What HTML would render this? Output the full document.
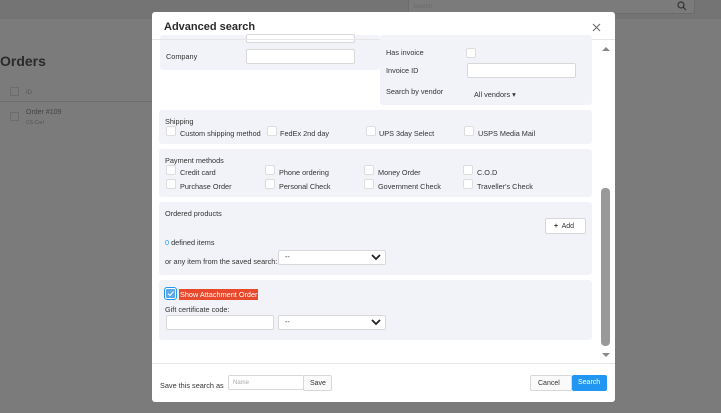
<!DOCTYPE html>
<html><head><style>
*{box-sizing:border-box;margin:0;padding:0}
body{width:721px;height:413px;background:#7b7b7b;font-family:"Liberation Sans","DejaVu Sans",sans-serif;position:relative;overflow:hidden;color:#333}
.a{position:absolute}
.t{position:absolute;font-size:7.3px;color:#333;white-space:nowrap;margin-top:1.5px}
.panel{position:absolute;background:#f1f3f9;border-radius:3px}
.cb{position:absolute;width:10px;height:10px;background:#fff;border:1px solid #ddd;border-radius:2px}
.inp{position:absolute;background:#fff;border:1px solid #d8d8d8;border-radius:2px}
.sel{position:absolute;background:#fff;border:1px solid #d8d8d8;border-radius:2px;font-size:7px;padding:3px 6px;color:#333}
.sel svg{position:absolute;right:4px;top:3px}
</style></head><body>
<div class="a" style="left:0;top:0;width:721px;height:19px;background:#747474"></div>
<div class="a" style="left:408px;top:-2px;width:287px;height:16px;border:1px solid #6c6c6c;background:#7b7b7b;border-radius:2px"></div>
<div class="t" style="left:413px;top:2px;color:#6a6a6a;font-size:6px">Search</div>
<svg class="a" style="left:677px;top:1px" width="10" height="10"><circle cx="4" cy="4" r="3" fill="none" stroke="#333" stroke-width="1.2"/><path d="M6 6 L9 9" stroke="#333" stroke-width="1.2"/></svg>
<div class="t" style="left:0;top:51px;font-size:14px;font-weight:bold;color:#2a2a2a">Orders</div>
<div class="a" style="left:0;top:101px;width:152px;height:1px;background:#6c6c6c"></div>
<div class="a" style="left:10px;top:87px;width:9px;height:9px;border:1px solid #6c6c6c"></div>
<div class="t" style="left:26px;top:88px;color:#555;font-size:6px">ID</div>
<div class="a" style="left:10px;top:112px;width:9px;height:9px;border:1px solid #6c6c6c"></div>
<div class="t" style="left:26px;top:107px;color:#444;font-size:7px">Order #109</div>
<div class="t" style="left:26px;top:118px;color:#555;font-size:5px">CS-Cart</div>

<div class="a" style="left:152px;top:12px;width:463px;height:390px;background:#fff;border-radius:3px;overflow:hidden">
<div class="t" style="left:12px;top:7px;font-size:11px;font-weight:bold;color:#2a2a2a">Advanced search</div>
<svg class="a" style="left:440px;top:11px" width="9" height="9"><path d="M1 1L8 8M8 1L1 8" stroke="#666" stroke-width="1"/></svg>
<div class="a" style="left:0;top:27px;width:463px;height:1px;background:#e6e6e6"></div>
<div class="a" style="left:0;top:351px;width:463px;height:1px;background:#e6e6e6"></div>
</div>

<div class="panel" style="left:160px;top:35px;width:220px;height:35px"></div>
<div class="inp" style="left:246px;top:34px;width:109px;height:9px"></div>
<div class="t" style="left:166px;top:50px">Company</div>
<div class="inp" style="left:246px;top:49px;width:109px;height:15px"></div>
<div class="a" style="left:152px;top:39px;width:463px;height:1px;background:#e6e6e6"></div>

<div class="panel" style="left:380px;top:35px;width:212px;height:70px"></div>
<div class="t" style="left:386px;top:46px">Has invoice</div>
<div class="cb" style="left:466px;top:48px"></div>
<div class="t" style="left:386px;top:64px">Invoice ID</div>
<div class="inp" style="left:467px;top:63px;width:109px;height:15px"></div>
<div class="t" style="left:386px;top:85px">Search by vendor</div>
<div class="t" style="left:474px;top:88px">All vendors ▾</div>

<div class="panel" style="left:159px;top:110px;width:433px;height:34px"></div>
<div class="t" style="left:165px;top:115px">Shipping</div>
<div class="cb" style="left:166px;top:126px"></div><div class="t" style="left:180px;top:127px">Custom shipping method</div>
<div class="cb" style="left:267px;top:126px"></div><div class="t" style="left:280px;top:127px">FedEx 2nd day</div>
<div class="cb" style="left:366px;top:126px"></div><div class="t" style="left:379px;top:127px">UPS 3day Select</div>
<div class="cb" style="left:464px;top:126px"></div><div class="t" style="left:478px;top:127px">USPS Media Mail</div>

<div class="panel" style="left:159px;top:149px;width:433px;height:48px"></div>
<div class="t" style="left:165px;top:154px">Payment methods</div>
<div class="cb" style="left:166px;top:165px"></div><div class="t" style="left:180px;top:166px">Credit card</div>
<div class="cb" style="left:265px;top:165px"></div><div class="t" style="left:279px;top:166px">Phone ordering</div>
<div class="cb" style="left:364px;top:165px"></div><div class="t" style="left:378px;top:166px">Money Order</div>
<div class="cb" style="left:463px;top:165px"></div><div class="t" style="left:477px;top:166px">C.O.D</div>
<div class="cb" style="left:166px;top:179px"></div><div class="t" style="left:180px;top:180px">Purchase Order</div>
<div class="cb" style="left:265px;top:179px"></div><div class="t" style="left:279px;top:180px">Personal Check</div>
<div class="cb" style="left:364px;top:179px"></div><div class="t" style="left:378px;top:180px">Government Check</div>
<div class="cb" style="left:463px;top:179px"></div><div class="t" style="left:477px;top:180px">Traveller's Check</div>

<div class="panel" style="left:159px;top:202px;width:433px;height:73px"></div>
<div class="t" style="left:165px;top:207px">Ordered products</div>
<div class="inp" style="left:545px;top:218px;width:41px;height:16px;font-size:7px;padding:4px 0 0 8px"><b>+</b>&nbsp; Add</div>
<div class="t" style="left:165px;top:236px"><span style="color:#2196f3">0</span> defined items</div>
<div class="t" style="left:165px;top:255px">or any item from the saved search:</div>
<div class="sel" style="left:278px;top:250px;width:108px;height:15px">--<svg width="10" height="7"><path d="M1 1L5 5L9 1" fill="none" stroke="#222" stroke-width="1.8"/></svg></div>

<div class="panel" style="left:159px;top:280px;width:433px;height:60px"></div>
<div class="a" style="left:164px;top:287px;width:13px;height:13px;border:1.5px solid #2196f3;border-radius:3px;background:#fff"></div>
<div class="a" style="left:166px;top:289px;width:9px;height:9px;background:#5aa9ea;border-radius:1px"></div>
<svg class="a" style="left:166px;top:289px" width="9" height="9"><path d="M2 4.5L4 6.5L7.5 2.5" fill="none" stroke="#fff" stroke-width="1"/></svg>
<div class="t" style="left:179px;top:287px;background:#e8482c;color:#fff;padding:1px 1px;">Show Attachment Order</div>
<div class="t" style="left:165px;top:303px">Gift certificate code:</div>
<div class="inp" style="left:166px;top:315px;width:108px;height:15px"></div>
<div class="sel" style="left:278px;top:315px;width:108px;height:15px">--<svg width="10" height="7"><path d="M1 1L5 5L9 1" fill="none" stroke="#222" stroke-width="1.8"/></svg></div>

<svg class="a" style="left:601px;top:45px" width="10" height="7"><path d="M1 6L5 2L9 6Z" fill="#888"/></svg>
<div class="a" style="left:601px;top:188px;width:9px;height:158px;background:#999;border-radius:4px"></div>
<svg class="a" style="left:601px;top:352px" width="10" height="7"><path d="M1 1L5 5L9 1Z" fill="#888"/></svg>

<div class="t" style="left:160px;top:379px">Save this search as</div>
<div class="inp" style="left:228px;top:375px;width:76px;height:15px;font-size:6px;color:#aaa;padding:4px 4px">Name</div>
<div class="inp" style="left:303px;top:375px;width:29px;height:16px;font-size:7px;padding:4px 0 0 6px;background:#fafafa">Save</div>
<div class="inp" style="left:530px;top:375px;width:42px;height:16px;font-size:7px;padding:4px 0 0 7px;background:#fafafa">Cancel</div>
<div class="a" style="left:572px;top:375px;width:35px;height:16px;background:#2196f3;border-radius:2px;color:#fff;font-size:7px;padding:4px 0 0 6px">Search</div>
</body></html>
